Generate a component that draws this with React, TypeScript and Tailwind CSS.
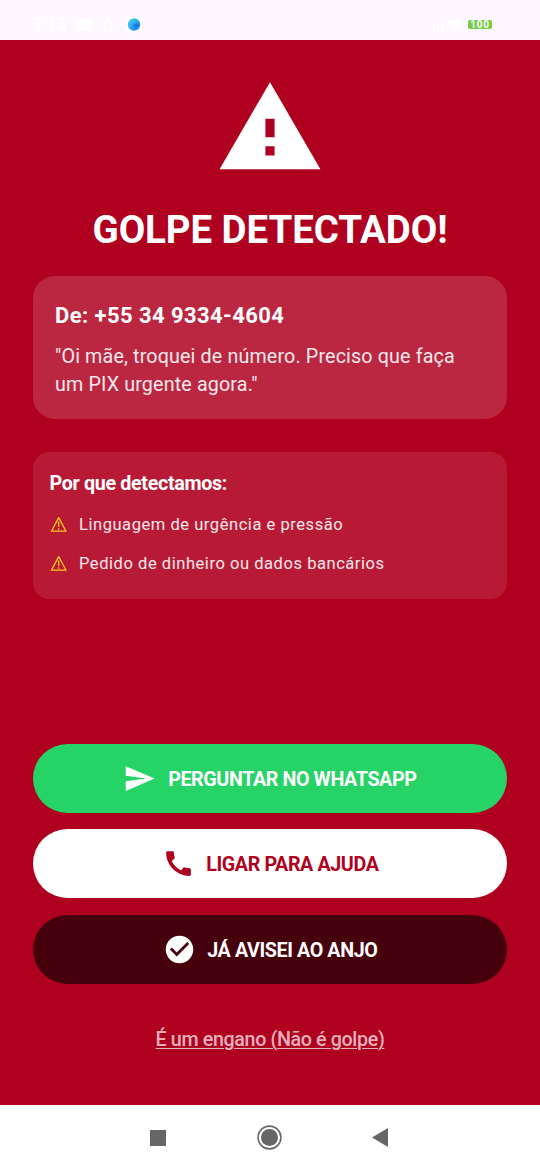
import React from 'react';

const reasons = ['Linguagem de urgência e pressão', 'Pedido de dinheiro ou dados bancários'];

const StatusBar: React.FC = () => (
  <div className="h-10 shrink-0 bg-[#fef7ff] flex items-center justify-between pl-[33px] pr-[27px] pt-[9px] text-white text-[17px] leading-none">
    <div className="flex items-center">
      <span className="w-[42px] font-medium">7:13</span>
      <svg className="w-[18px] h-[14px]" viewBox="0 0 18 14" fill="currentColor">
        <path d="M1 1h16v12H1z" />
      </svg>
      <svg className="ml-[8px] w-[14px] h-[14px]" viewBox="0 0 14 14" fill="none" stroke="currentColor" strokeWidth="2">
        <path d="M4 13V4l3-3 3 3v9M1 13h12" />
      </svg>
      <svg className="ml-[11px] w-[16px] h-[16px]" viewBox="0 0 16 16">
        <defs>
          <linearGradient id="globe" x1="0" y1="0" x2="1" y2="1">
            <stop offset="0" stopColor="#56d8ee" />
            <stop offset="0.5" stopColor="#27aaf0" />
            <stop offset="1" stopColor="#236df0" />
          </linearGradient>
        </defs>
        <rect width="16" height="16" rx="3" fill="#fff" />
        <circle cx="8" cy="7.5" r="6.2" fill="url(#globe)" />
        <path d="M7 7.5l5-1.5 1.5 2-2.5 2.5-3-.5z" fill="#1459dc" opacity="0.5" />
      </svg>
      <span className="ml-[12px] tracking-[2px] text-[15px]">•••</span>
    </div>
    <div className="flex items-center">
      <svg className="w-[34px] h-[12px] mr-[5px]" viewBox="0 0 34 12" fill="currentColor">
        <path d="M0 9h2v3H0zM4 6h2v6H4zM8 3h2v9H8zM12 0h2v12h-2zM18 3c5-4 10-4 15 0l-7.5 9z" />
      </svg>
      <span className="w-[24px] h-[9px] mr-[21px] rounded-[2px] bg-[#76cc48] flex items-center justify-center text-[10px] font-bold tracking-[0.8px]">
        100
      </span>
    </div>
  </div>
);

const ReasonRow: React.FC<{ label: string }> = ({ label }) => (
  <li className="h-[39px] flex items-center">
    <svg className="w-[18px] h-[17px] mt-[2px] mr-[11.5px]" viewBox="0 0 18 17" fill="none">
      <path d="M8.7 1.6L16 15.2H1.4z" stroke="#fcc81c" strokeWidth="1.3" strokeLinejoin="round" />
      <path d="M8.7 5.5v5.5M8.7 12.3v1.5" stroke="#fcc81c" strokeWidth="1.3" />
    </svg>
    <span className="pt-[2px] text-[16.5px] tracking-[0.55px] text-white/90">{label}</span>
  </li>
);

interface ActionButtonProps {
  label: string;
  path: string;
  className: string;
}

const ActionButton: React.FC<ActionButtonProps> = ({ label, path, className }) => (
  <button className={`h-[69px] w-full rounded-full flex items-center justify-center gap-[11.7px] ${className}`}>
    <svg className="w-[33px] h-[33px]" viewBox="0 0 24 24" fill="currentColor">
      <path d={path} />
    </svg>
    <span className="pt-[2px] text-[19.7px] font-bold tracking-[-0.4px]">{label}</span>
  </button>
);

export default function App() {
  return (
    <div className="w-[540px] h-[1170px] flex flex-col overflow-hidden bg-[#b00020] text-white font-['Roboto',sans-serif]">
      <StatusBar />

      <main className="flex-1 flex flex-col px-[33px] pt-[33px]">
        <svg className="w-[110px] h-[110px] mx-auto shrink-0" viewBox="0 0 24 24" fill="currentColor">
          <path d="M1 21h22L12 2 1 21zm12-3h-2v-2h2v2zm0-4h-2v-4h2v4z" />
        </svg>

        <h1 className="mt-[22px] h-[49.5px] text-[38.5px] leading-[49.5px] font-bold tracking-[-0.1px] text-center whitespace-nowrap">
          GOLPE DETECTADO!
        </h1>

        {/* Suspicious message */}
        <section className="mt-[21.9px] h-[143px] rounded-[22px] bg-white/15 px-[22px] pt-[23px]">
          <h2 className="text-[22px] leading-[33px] font-bold tracking-[0.42px]">De: +55 34 9334-4604</h2>
          <p className="mt-[11px] text-[19.7px] leading-[27.5px] tracking-[0.15px] text-white/90">
            "Oi mãe, troquei de número. Preciso que faça
            <br />
            um PIX urgente agora."
          </p>
        </section>

        {/* Detection reasons */}
        <section className="mt-[33px] h-[147px] rounded-[16.5px] bg-white/10 px-[16.5px] pt-[17.5px]">
          <h3 className="text-[19.7px] leading-[27.5px] font-bold tracking-[-0.33px]">Por que detectamos:</h3>
          <ul className="mt-[7px]">
            {reasons.map((reason) => (
              <ReasonRow key={reason} label={reason} />
            ))}
          </ul>
        </section>

        <div className="mt-auto flex flex-col gap-[16.6px]">
          <ActionButton
            label="PERGUNTAR NO WHATSAPP"
            className="bg-[#25d366] text-white"
            path="M2.01 21L23 12 2.01 3 2 10l15 2-15 2z"
          />
          <ActionButton
            label="LIGAR PARA AJUDA"
            className="bg-white text-[#b00020]"
            path="M20.01 15.38c-1.23 0-2.42-.2-3.53-.56-.35-.12-.74-.03-1.01.24l-1.57 1.97c-2.83-1.35-5.48-3.9-6.89-6.83l1.95-1.66c.27-.28.35-.67.24-1.02-.37-1.11-.56-2.3-.56-3.53 0-.54-.45-.99-.99-.99H4.19C3.65 3 3 3.24 3 3.99 3 13.28 10.73 21 20.01 21c.71 0 .99-.63.99-1.18v-3.45c0-.54-.45-.99-.99-.99z"
          />
          <ActionButton
            label="JÁ AVISEI AO ANJO"
            className="bg-black/60 text-white"
            path="M12 2C6.48 2 2 6.48 2 12s4.48 10 10 10 10-4.48 10-10S17.52 2 12 2zm-2 15l-5-5 1.41-1.41L10 14.17l7.59-7.59L19 8l-9 9z"
          />
        </div>

        <button className="mt-[41px] mb-[51px] h-[29px] self-center text-[19.7px] font-medium tracking-[-0.37px] text-white/70 underline decoration-1 underline-offset-[2px]">
          É um engano (Não é golpe)
        </button>
      </main>

      {/* Android navigation */}
      <nav className="h-[65px] shrink-0 bg-white flex items-center pl-[150px] text-[#666]">
        <span className="w-4 h-4 bg-current" />
        <svg className="ml-[91.3px] w-[25px] h-[25px]" viewBox="0 0 25 25">
          <circle cx="12.5" cy="12.5" r="11.4" fill="none" stroke="currentColor" strokeWidth="1.6" />
          <circle cx="12.5" cy="12.5" r="8.5" fill="currentColor" />
        </svg>
        <svg className="ml-[90px] w-4 h-[19px]" viewBox="0 0 16 19" fill="currentColor">
          <path d="M16 0v19L0 9.5z" />
        </svg>
      </nav>
    </div>
  );
}
